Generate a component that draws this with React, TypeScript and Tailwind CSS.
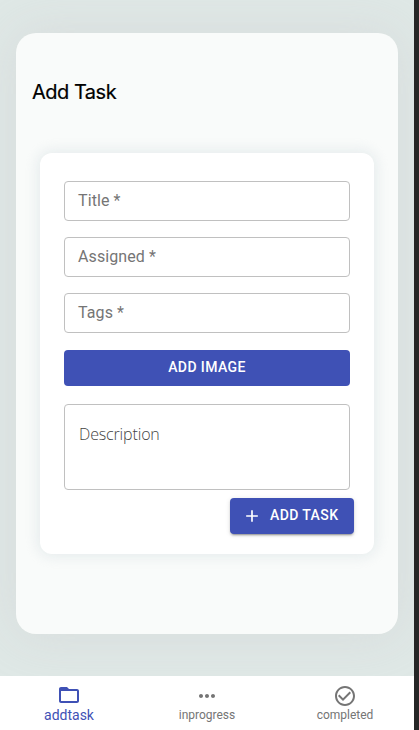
import React from "react";

function Field({ label }: { label: string }) {
  return (
    <div className="flex h-10 items-center rounded border border-[#c0c0c0] px-[13px] pb-[2px] text-base leading-[19px] tracking-[0.1px] text-[#757575]">
      {label}
    </div>
  );
}

function Icon({ d, className }: { d: string; className: string }) {
  return (
    <svg viewBox="0 0 24 24" fill="currentColor" className={className}>
      <path d={d} />
    </svg>
  );
}

const tabs = [
  {
    label: "addtask",
    active: true,
    icon: "M20 6h-8l-2-2H4c-1.1 0-1.99.9-1.99 2L2 18c0 1.1.9 2 2 2h16c1.1 0 2-.9 2-2V8c0-1.1-.9-2-2-2zm0 12H4V8h16v10z",
  },
  {
    label: "inprogress",
    active: false,
    icon: "M6 10c-1.1 0-2 .9-2 2s.9 2 2 2 2-.9 2-2-.9-2-2-2zm12 0c-1.1 0-2 .9-2 2s.9 2 2 2 2-.9 2-2-.9-2-2-2zm-6 0c-1.1 0-2 .9-2 2s.9 2 2 2 2-.9 2-2-.9-2-2-2z",
  },
  {
    label: "completed",
    active: false,
    icon: "M16.59 7.58L10 14.17l-3.59-3.58L5 12l5 5 8-8zM12 2C6.48 2 2 6.48 2 12s4.48 10 10 10 10-4.48 10-10S17.52 2 12 2zm0 18c-4.42 0-8-3.58-8-8s3.58-8 8-8 8 3.58 8 8-3.58 8-8 8z",
  },
];

export default function App() {
  return (
    <div className="flex h-[730px] w-[419px] overflow-hidden bg-[#262626] font-[Roboto,sans-serif]">
      <div className="flex w-[414px] flex-col overflow-hidden bg-[#dfe8e6]">
        <main className="h-[676px] overflow-hidden px-4 pt-[33px]">
          <section className="h-[601px] rounded-[20px] bg-[#f9fbfa] px-6 pt-[45px] shadow-[0_0_50px_rgba(200,190,195,0.3)]">
            <h1 className="-ml-2 h-7 whitespace-nowrap font-[Inter,sans-serif] text-[20px] font-normal leading-7 tracking-[-0.5px] text-black [-webkit-text-stroke:0.2px_black]">
              Add Task
            </h1>
            <form className="mt-[47px] h-[401px] w-[334px] rounded-xl bg-white px-6 pt-7 shadow-[0_0_14px_2px_rgba(215,224,227,0.6)]">
              <div className="flex flex-col gap-4">
                <Field label="Title *" />
                <Field label="Assigned *" />
                <Field label="Tags *" />
              </div>
              <button
                type="button"
                className="mt-[17px] flex h-9 w-full items-center justify-center rounded bg-[#3f51b5] pb-[2px] text-sm font-medium tracking-[0.4px] text-white"
              >
                ADD IMAGE
              </button>
              <div className="mt-[18px] h-[86px] rounded border border-[#c0c0c0] pl-[14px] pt-[18px] font-['Open_Sans',sans-serif] text-base font-light leading-[22px] tracking-[-0.15px] text-[#444]">
                Description
              </div>
              <div className="-mr-1 mt-2 flex justify-end">
                <button
                  type="button"
                  className="flex h-9 w-[124px] items-center rounded bg-[#3f51b5] pl-3 text-sm font-medium tracking-[0.4px] text-white shadow-[0_3px_1px_-2px_rgba(0,0,0,0.2),0_2px_2px_0_rgba(0,0,0,0.14),0_1px_5px_0_rgba(0,0,0,0.12)]"
                >
                  <Icon
                    d="M19 13h-6v6h-2v-6H5v-2h6V5h2v6h6v2z"
                    className="mr-2 size-5"
                  />
                  <span className="pb-[2px]">ADD TASK</span>
                </button>
              </div>
            </form>
          </section>
        </main>
        <nav className="grid h-[54px] grid-cols-3 bg-white">
          {tabs.map((t) => (
            <div
              key={t.label}
              className={
                t.active
                  ? "flex flex-col items-center pt-[7px] text-sm leading-4 text-[#3f51b5]"
                  : "flex flex-col items-center pt-2 text-xs leading-[14px] text-[#757575]"
              }
            >
              <Icon d={t.icon} className="size-6 shrink-0" />
              <span>{t.label}</span>
            </div>
          ))}
        </nav>
      </div>
    </div>
  );
}
